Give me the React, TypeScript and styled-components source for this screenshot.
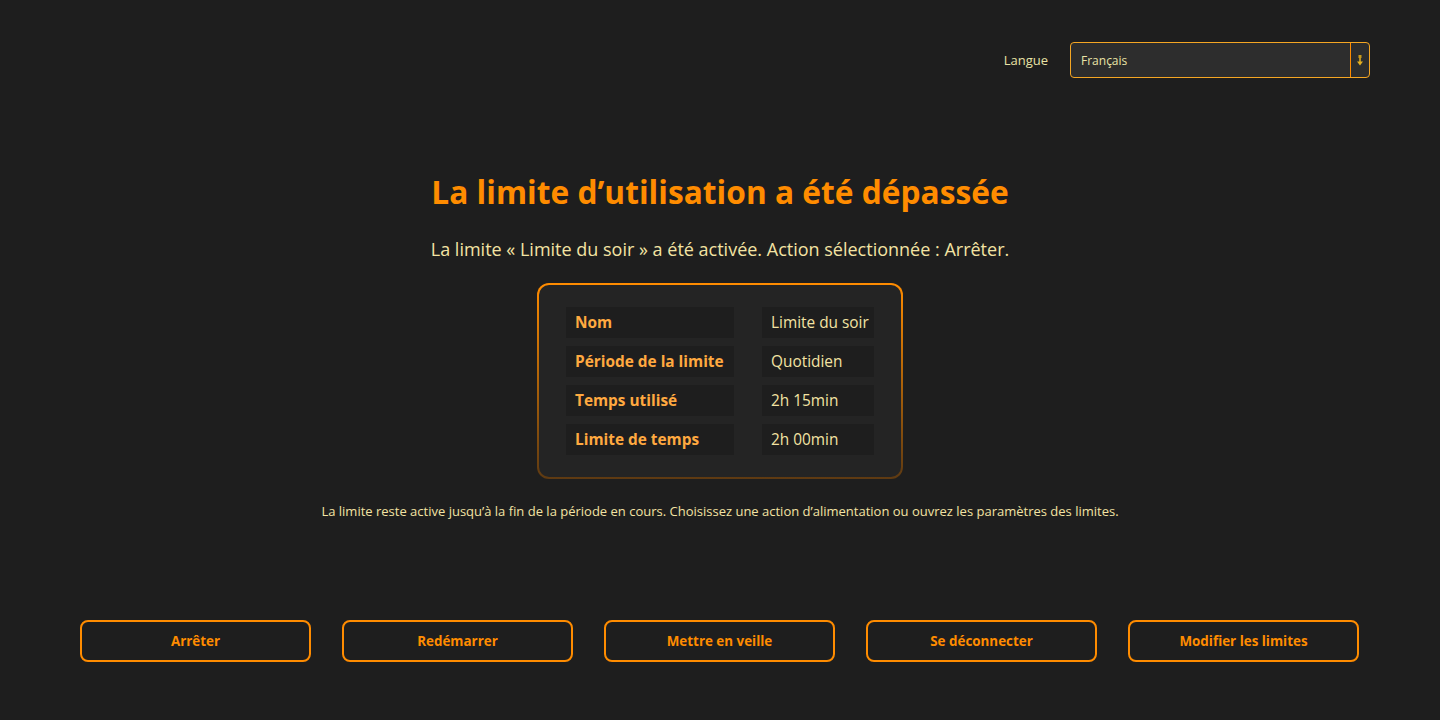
import React from 'react';
import styled, { createGlobalStyle } from 'styled-components';

const GlobalStyle = createGlobalStyle`
  html, body {
    margin: 0;
    padding: 0;
    background: #1e1e1e;
  }
  body {
    font-family: 'Open Sans', 'Noto Sans', sans-serif;
    color: #f3e3a3;
  }
`;

const Page = styled.div`
  box-sizing: border-box;
  height: 720px;
  padding: 42px 70px 0 80px;
  display: flex;
  flex-direction: column;
`;

const TopBar = styled.div`
  display: flex;
  justify-content: flex-end;
  align-items: center;
  gap: 22px;
`;

const Label = styled.span`
  font-size: 13px;
  color: #e9e3a6;
`;

const SelectBox = styled.div`
  box-sizing: border-box;
  width: 300px;
  height: 36px;
  display: flex;
  align-items: stretch;
  border: 1px solid #f5a623;
  border-radius: 4px;
  background: #2d2d2d;
  overflow: hidden;
`;

const SelectText = styled.div`
  flex: 1;
  display: flex;
  align-items: center;
  padding-left: 10px;
  font-size: 12px;
  color: #e9e3a6;
`;

const SelectArrow = styled.div`
  width: 18px;
  display: flex;
  align-items: center;
  justify-content: center;
  border-left: 1px solid #ff8c00;
`;

const Main = styled.div`
  display: flex;
  flex-direction: column;
  align-items: center;
  padding-right: 10px;
`;

const Title = styled.h1`
  margin: 92px 0 0;
  font-size: 31.7px;
  font-weight: 700;
  line-height: 44px;
  color: #ff8c00;
`;

const Subtitle = styled.p`
  margin: 22px 0 0;
  font-size: 18px;
  line-height: 26px;
  color: #f3e3a3;
`;

const Card = styled.div`
  box-sizing: border-box;
  margin-top: 21px;
  width: 366px;
  padding: 22px 27px;
  border-radius: 12px;
  border: 2px solid transparent;
  background:
    linear-gradient(#242424, #242424) padding-box,
    linear-gradient(#ff8c00, #5e3a12) border-box;
`;

const InfoGrid = styled.div`
  display: grid;
  grid-template-columns: 168px 112px;
  column-gap: 28px;
  row-gap: 8px;
`;

const Cell = styled.div<{ $head?: boolean }>`
  height: 31px;
  display: flex;
  align-items: center;
  padding-left: 9px;
  background: #1e1e1e;
  font-size: 15.4px;
  white-space: nowrap;
  font-weight: ${(p) => (p.$head ? 700 : 400)};
  color: ${(p) => (p.$head ? '#ffa940' : '#f3e3a3')};
`;

const Note = styled.p`
  margin: 23px 0 0;
  font-size: 13px;
  line-height: 18px;
  color: #f3e3a3;
`;

const Actions = styled.div`
  margin-top: auto;
  margin-bottom: 58px;
  display: grid;
  grid-template-columns: repeat(5, 231px);
  column-gap: 31px;
  padding-right: 10px;
`;

const ActionButton = styled.button`
  box-sizing: border-box;
  height: 42px;
  border: 2px solid #ff8c00;
  border-radius: 8px;
  background: transparent;
  color: #ff8c00;
  font-family: inherit;
  font-size: 13.4px;
  font-weight: 700;
  cursor: pointer;
`;

const rows: [string, string][] = [
  ['Nom', 'Limite du soir'],
  ['Période de la limite', 'Quotidien'],
  ['Temps utilisé', '2h 15min'],
  ['Limite de temps', '2h 00min'],
];

const actions = ['Arrêter', 'Redémarrer', 'Mettre en veille', 'Se déconnecter', 'Modifier les limites'];

export default function App() {
  return (
    <>
      <GlobalStyle />
      <Page>
        <TopBar>
          <Label>Langue</Label>
          <SelectBox>
            <SelectText>Français</SelectText>
            <SelectArrow>
              <svg width="6" height="11" viewBox="0 0 6 11">
                <rect x="1.5" y="0" width="3" height="3" fill="#c99a1a" />
                <rect x="2.2" y="3" width="1.6" height="4" fill="#d9a820" />
                <path d="M0 6.5 L6 6.5 L3 10.5 Z" fill="#e5b020" />
              </svg>
            </SelectArrow>
          </SelectBox>
        </TopBar>
        <Main>
          <Title>La limite d’utilisation a été dépassée</Title>
          <Subtitle>La limite « Limite du soir » a été activée. Action sélectionnée : Arrêter.</Subtitle>
          <Card>
            <InfoGrid>
              {rows.map(([k, v]) => (
                <React.Fragment key={k}>
                  <Cell $head>{k}</Cell>
                  <Cell>{v}</Cell>
                </React.Fragment>
              ))}
            </InfoGrid>
          </Card>
          <Note>
            La limite reste active jusqu’à la fin de la période en cours. Choisissez une action d’alimentation ou ouvrez les paramètres des limites.
          </Note>
        </Main>
        <Actions>
          {actions.map((a) => (
            <ActionButton key={a}>{a}</ActionButton>
          ))}
        </Actions>
      </Page>
    </>
  );
}
